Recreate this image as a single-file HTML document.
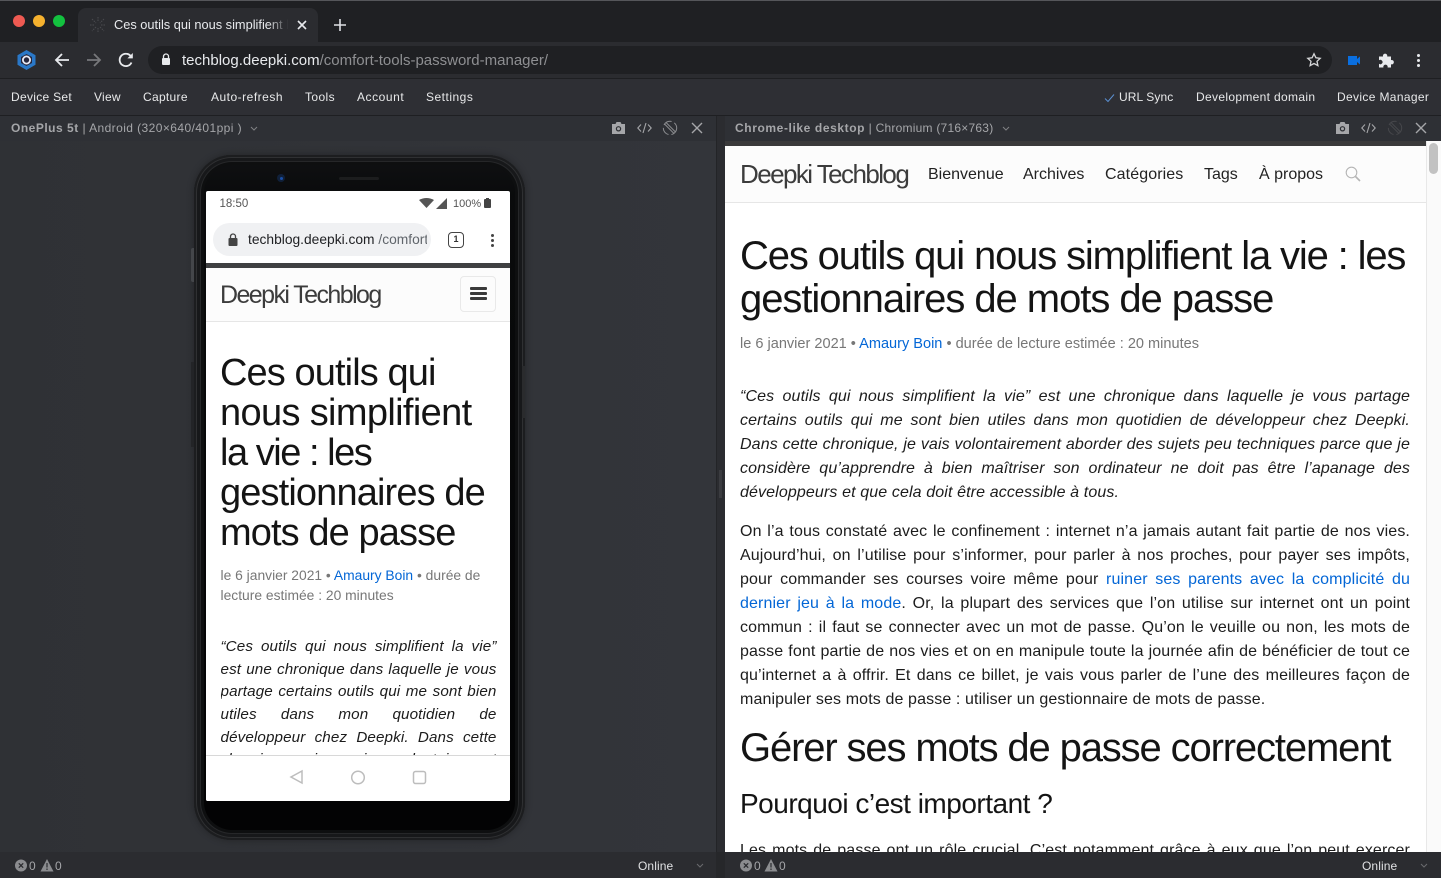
<!DOCTYPE html>
<html><head><meta charset="utf-8"><title>Ces outils qui nous simplifient la vie</title>
<style>
html,body{margin:0;padding:0;width:1441px;height:878px;overflow:hidden;background:#303236;font-family:"Liberation Sans",sans-serif;}
.a{position:absolute;}
.t{position:absolute;white-space:nowrap;}
.m{position:absolute;white-space:nowrap;top:89px;font-size:12px;line-height:16px;color:#e8e9ea;}
.b{position:absolute;left:740px;width:670px;font-size:16px;line-height:24px;height:24px;color:#1c1c1c;white-space:normal;text-align:justify;text-align-last:justify;overflow:hidden;letter-spacing:.12px;}
.e{text-align-last:left;}
.i{font-style:italic;}
.p{position:absolute;left:220.5px;width:276px;font-size:15.2px;line-height:22px;height:22px;color:#1c1c1c;font-style:italic;text-align:justify;text-align-last:justify;overflow:hidden;letter-spacing:.12px;}
.h1{position:absolute;left:740px;font-size:40px;line-height:42px;letter-spacing:-1.25px;color:#141414;white-space:nowrap;}
.h2{position:absolute;left:220px;font-size:38px;line-height:40px;letter-spacing:-1.2px;color:#141414;white-space:nowrap;}
.n{position:absolute;top:165px;font-size:16px;line-height:20px;color:#222;white-space:nowrap;}
a{color:#0366d6;text-decoration:none;}
.meta{color:#777;position:absolute;white-space:nowrap;}
</style></head><body>
<!-- window chrome -->
<div class="a" style="left:0;top:0;width:1441px;height:42px;background:#1f2023;"></div>
<div class="a" style="left:0;top:42px;width:1441px;height:36px;background:#2b2c30;"></div>
<div class="a" style="left:0;top:78px;width:1441px;height:38px;background:#2e2f34;border-top:1px solid #1e1f22;border-bottom:1px solid #1e1f22;box-sizing:border-box;"></div>
<div class="a" style="left:0;top:116px;width:1441px;height:25px;background:#2e3035;"></div>
<div class="a" style="left:0;top:0;width:1441px;height:1px;background:#55565a;"></div>
<div class="a" style="left:13px;top:15px;width:12px;height:12px;border-radius:50%;background:#ee5a52;"></div>
<div class="a" style="left:33px;top:15px;width:12px;height:12px;border-radius:50%;background:#f5b12e;"></div>
<div class="a" style="left:53px;top:15px;width:12px;height:12px;border-radius:50%;background:#13c13f;"></div>
<!-- tab -->
<div class="a" style="left:78px;top:8px;width:240px;height:34px;background:#2b2c30;border-radius:8px 8px 0 0;"></div>
<svg class="a" style="left:89px;top:16px" width="18" height="18" viewBox="0 0 18 18" stroke="#4b4c50" stroke-width="1" fill="none" stroke-dasharray="1.500 1"><path d="M9 1v5M9 12v5M1 9h5M12 9h5M3 3l4 4M11 11l4 4M15 3l-4 4M7 11l-4 4"/></svg>
<div class="t" style="left:114px;top:17px;font-size:12.8px;line-height:16px;color:#e8eaed;width:176px;overflow:hidden;">Ces outils qui nous simplifient la vie</div>
<div class="a" style="left:268px;top:14px;width:24px;height:22px;background:linear-gradient(90deg,rgba(43,44,48,0),#2b2c30 85%);"></div>
<svg class="a" style="left:296px;top:19px" width="12" height="12" viewBox="0 0 12 12" stroke="#e8eaed" stroke-width="1.6"><path d="M2 2l8 8M10 2l-8 8"/></svg>
<svg class="a" style="left:333px;top:18px" width="14" height="14" viewBox="0 0 14 14" stroke="#dfe1e5" stroke-width="1.6"><path d="M7 1v12M1 7h12"/></svg>
<!-- toolbar -->
<svg class="a" style="left:16px;top:49px" width="21" height="22" viewBox="0 0 21 22"><path d="M10.5 1l9 5.2v9.6l-9 5.2-9-5.2V6.200z" fill="#2a78c8"/><path d="M10.500 5l5.500 3v6l-5.500 3-5.500-3V8z" fill="#26273d"/><circle cx="10.500" cy="11" r="3.600" fill="none" stroke="#e8eaf5" stroke-width="1.800"/></svg>
<svg class="a" style="left:53px;top:51px" width="18" height="18" viewBox="0 0 18 18" stroke="#e8eaed" stroke-width="1.800" fill="none"><path d="M16 9H3M9 3L3 9l6 6"/></svg>
<svg class="a" style="left:85px;top:51px" width="18" height="18" viewBox="0 0 18 18" stroke="#77787b" stroke-width="1.800" fill="none"><path d="M2 9h13M9 3l6 6-6 6"/></svg>
<svg class="a" style="left:117px;top:51px" width="18" height="18" viewBox="0 0 18 18" stroke="#e8eaed" stroke-width="1.800" fill="none"><path d="M14.500 11.500A6.200 6.200 0 1 1 13.500 4.800L15 6.500"/><path d="M15.800 2v5.400h-5.400z" fill="#e8eaed" stroke="none"/></svg>
<div class="a" style="left:148px;top:46px;width:1184px;height:28px;border-radius:14px;background:#1f2023;"></div>
<svg class="a" style="left:161px;top:53px" width="10" height="13" viewBox="0 0 10 13"><path d="M2.500 5.500V3.500a2.500 2.500 0 0 1 5 0v2" fill="none" stroke="#e8eaed" stroke-width="1.300"/><rect x="1" y="5" width="8" height="7" rx="1" fill="#e8eaed"/></svg>
<div class="t" style="left:182px;top:52px;font-size:15px;line-height:18px;color:#e8eaed;">techblog.deepki.com<span style="color:#8e8f92">/comfort-tools-password-manager/</span></div>
<svg class="a" style="left:1306px;top:52px" width="16" height="16" viewBox="0 0 16 16" fill="none" stroke="#d5d6d8" stroke-width="1.300"><path d="M8 1.800l1.900 4 4.300.500-3.200 3 .9 4.300L8 11.500l-3.900 2.100.9-4.300-3.200-3 4.300-.500z"/></svg>
<svg class="a" style="left:1348px;top:56px" width="12" height="9" viewBox="0 0 12 9" fill="#0a6fe0"><rect x="0" y="0" width="9" height="9"/><path d="M9 3L12 .500v8L9 6z"/></svg>
<svg class="a" style="left:1378px;top:52px" width="16" height="16" viewBox="0 0 16 16" fill="#e8eaed"><path d="M1 4.500h4a2.200 2.200 0 1 1 4.200 0h3.800v3.600a2.200 2.200 0 1 1 0 4.200V15.500H9.600a2.200 2.200 0 1 0-4.200 0H1v-3.700a2.200 2.200 0 1 0 0-3.500z"/></svg>
<div class="a" style="left:1417px;top:54px;width:3px;height:3px;border-radius:50%;background:#e8eaed;box-shadow:0 5px 0 #e8eaed,0 10px 0 #e8eaed;"></div>
<!-- menu -->
<div class="m" style="left:11px;letter-spacing:.3px;">Device Set</div>
<div class="m" style="left:94px;letter-spacing:.25px;">View</div>
<div class="m" style="left:143px;letter-spacing:.3px;">Capture</div>
<div class="m" style="left:211px;letter-spacing:.5px;">Auto-refresh</div>
<div class="m" style="left:305px;letter-spacing:.4px;">Tools</div>
<div class="m" style="left:357px;letter-spacing:.55px;">Account</div>
<div class="m" style="left:426px;letter-spacing:.5px;">Settings</div>
<svg class="a" style="left:1104px;top:93px" width="11" height="10" viewBox="0 0 11 10" fill="none" stroke="#5b8fd0" stroke-width="1"><path d="M1 5.500l3 3L10 1.500"/></svg>
<div class="m" style="left:1119px;letter-spacing:.1px;">URL Sync</div>
<div class="m" style="left:1196px;letter-spacing:.33px;">Development domain</div>
<div class="m" style="left:1337px;letter-spacing:.35px;">Device Manager</div>
<!-- device headers -->
<div class="t" style="left:11px;top:120px;font-size:12px;line-height:16px;color:#a5a6a9;letter-spacing:.42px;"><b style="letter-spacing:.5px">OnePlus 5t</b> | Android (320×640/401ppi )</div>
<svg class="a" style="left:250px;top:126px" width="8" height="5" viewBox="0 0 8 5" fill="none" stroke="#808184"><path d="M1 1l3 3 3-3"/></svg>
<div class="t" style="left:735px;top:120px;font-size:12px;line-height:16px;color:#a5a6a9;letter-spacing:.23px;"><b style="letter-spacing:.6px">Chrome-like desktop</b> | Chromium (716×763)</div>
<svg class="a" style="left:1002px;top:126px" width="8" height="5" viewBox="0 0 8 5" fill="none" stroke="#808184"><path d="M1 1l3 3 3-3"/></svg>
<!-- header icons left -->
<svg class="a" style="left:611px;top:121px" width="15" height="14" viewBox="0 0 15 14"><path d="M1 3h3.500l1-2h4l1 2H14v10H1z" fill="#a5a6a9"/><circle cx="7.500" cy="7.800" r="2.700" fill="#2e3035"/><circle cx="7.500" cy="7.800" r="1.500" fill="#a5a6a9"/></svg>
<svg class="a" style="left:637px;top:122px" width="15" height="12" viewBox="0 0 15 12" fill="none" stroke="#a5a6a9" stroke-width="1.100"><path d="M4 2.500L.800 6 4 9.500M11 2.500L14.200 6 11 9.500M9 1L6 11"/></svg>
<svg class="a" style="left:662px;top:120px" width="16" height="16" viewBox="0 0 16 16" fill="none" stroke="#8b8c8f" stroke-width="1"><circle cx="8" cy="8" r="6.700" stroke-dasharray="9 3"/><path d="M4 2.500l9.500 9.500M2.500 4L12 13.500"/></svg>
<svg class="a" style="left:691px;top:122px" width="12" height="12" viewBox="0 0 12 12" stroke="#a5a6a9" stroke-width="1.400"><path d="M1 1l10 10M11 1L1 11"/></svg>
<svg class="a" style="left:1335px;top:121px" width="15" height="14" viewBox="0 0 15 14"><path d="M1 3h3.500l1-2h4l1 2H14v10H1z" fill="#a5a6a9"/><circle cx="7.500" cy="7.800" r="2.700" fill="#2e3035"/><circle cx="7.500" cy="7.800" r="1.500" fill="#a5a6a9"/></svg>
<svg class="a" style="left:1361px;top:122px" width="15" height="12" viewBox="0 0 15 12" fill="none" stroke="#a5a6a9" stroke-width="1.100"><path d="M4 2.500L.800 6 4 9.500M11 2.500L14.200 6 11 9.500M9 1L6 11"/></svg>
<svg class="a" style="left:1387px;top:120px" width="16" height="16" viewBox="0 0 16 16" fill="none" stroke="#46474b" stroke-width="1"><circle cx="8" cy="8" r="6.700" stroke-dasharray="9 3"/><path d="M4 2.500l9.500 9.500M2.500 4L12 13.500"/></svg>
<svg class="a" style="left:1415px;top:122px" width="12" height="12" viewBox="0 0 12 12" stroke="#a5a6a9" stroke-width="1.400"><path d="M1 1l10 10M11 1L1 11"/></svg>
<!-- left pane -->
<div class="a" style="left:0;top:141px;width:716px;height:711px;background:linear-gradient(90deg,#2f3135,#33353a);"></div>
<div class="a" style="left:716px;top:116px;width:9px;height:736px;background:#2b2c30;border-left:1px solid #232427;box-sizing:border-box;"></div>
<div class="a" style="left:719px;top:470px;width:3px;height:28px;background:#3b3c40;"></div>
<!-- phone -->
<div class="a" style="left:194px;top:155px;width:331px;height:685px;box-sizing:border-box;border-radius:38px;background:linear-gradient(180deg,#101113 0,#0a0b0c 6%,#030304 95%);box-shadow:inset 0 0 0 2px #1c1d1f,inset 0 0 0 3px #2f3032,inset 0 0 0 6px #17181a,inset 0 0 0 7px #262729,inset 0 0 0 10px #0e0f10,0 0 8px rgba(0,0,0,.3);"></div>
<div class="a" style="left:191px;top:248px;width:3px;height:34px;background:#44464a;border-radius:2px 0 0 2px;"></div>
<div class="a" style="left:191px;top:362px;width:3px;height:85px;background:#232427;"></div>
<div class="a" style="left:522px;top:366px;width:3px;height:52px;background:#2a2b2d;"></div>
<div class="a" style="left:277px;top:174px;width:8px;height:8px;border-radius:50%;background:#10203a;"></div>
<div class="a" style="left:279.500px;top:176.500px;width:3px;height:3px;border-radius:50%;background:#1a4fa8;"></div>
<div class="a" style="left:339px;top:177px;width:40px;height:3px;background:#1c1d1e;border-radius:2px;"></div>
<!-- phone screen -->
<div class="a" style="left:206px;top:191px;width:304px;height:610px;background:#fff;border-radius:2px;overflow:hidden;"></div>
<div class="t" style="left:219.500px;top:197px;font-size:11.500px;line-height:14px;color:#555;">18:50</div>
<svg class="a" style="left:419px;top:197px" width="30" height="12" viewBox="0 0 30 12"><path d="M0 3Q7.500-1 15 3L7.500 11z" fill="#555"/><path d="M28 1v11H17z" fill="#555"/></svg>
<div class="t" style="left:453px;top:197px;font-size:11px;line-height:14px;color:#555;">100%</div>
<div class="a" style="left:484px;top:199px;width:7px;height:9px;background:#444;border-radius:1px;"></div>
<div class="a" style="left:486px;top:198px;width:3px;height:1px;background:#444;"></div>
<div class="a" style="left:213px;top:223px;width:218px;height:33px;background:#f0f1f3;border-radius:17px;"></div>
<svg class="a" style="left:228px;top:233px" width="10" height="13" viewBox="0 0 10 13"><path d="M2.500 5.500V3.500a2.500 2.500 0 0 1 5 0v2" fill="none" stroke="#444" stroke-width="1.300"/><rect x="0.500" y="5" width="9" height="8" rx="1" fill="#444"/></svg>
<div class="t" style="left:248px;top:232px;font-size:13.800px;line-height:16px;color:#202124;width:179px;overflow:hidden;">techblog.deepki.com <span style="color:#60656b">/comfort-tools-password</span></div>
<div class="a" style="left:448px;top:232px;width:16px;height:16px;box-sizing:border-box;border:1.500px solid #444;border-radius:4px;font-size:9px;line-height:13px;text-align:center;color:#333;font-weight:bold;">1</div>
<div class="a" style="left:491px;top:234px;width:3px;height:3px;border-radius:50%;background:#444;box-shadow:0 5px 0 #444,0 10px 0 #444;"></div>
<div class="a" style="left:206px;top:263px;width:304px;height:5px;background:#3f4042;"></div>
<div class="a" style="left:206px;top:268px;width:304px;height:53px;background:#fcfcfc;border-bottom:1px solid #e6e6e6;"></div>
<div class="t" style="left:220px;top:280px;font-size:25px;line-height:30px;letter-spacing:-1.580px;color:#3c3c3c;">Deepki Techblog</div>
<div class="a" style="left:460px;top:276px;width:36px;height:36px;box-sizing:border-box;border:1px solid #e9e9e9;border-radius:4px;"></div>
<div class="a" style="left:470px;top:287px;width:17px;height:3px;background:#3a3a3a;border-radius:1px;box-shadow:0 5px 0 #3a3a3a,0 10px 0 #3a3a3a;"></div>
<div class="h2" style="top:353px;letter-spacing:-.9px;">Ces outils qui</div>
<div class="h2" style="top:393px;letter-spacing:-.65px;">nous simplifient</div>
<div class="h2" style="top:433px;letter-spacing:-1.47px;">la vie : les</div>
<div class="h2" style="top:473px;letter-spacing:-.87px;">gestionnaires de</div>
<div class="h2" style="top:513px;letter-spacing:-.9px;">mots de passe</div>
<div class="meta" style="left:220.500px;top:565px;font-size:13.850px;line-height:20px;">le 6 janvier 2021 • <a>Amaury Boin</a> • durée de</div>
<div class="meta" style="left:220.500px;top:585px;font-size:13.850px;line-height:20px;">lecture estimée : 20 minutes</div>
<div class="p" style="top:636px;">“Ces outils qui nous simplifient la vie”</div>
<div class="p" style="top:659px;">est une chronique dans laquelle je vous</div>
<div class="p" style="top:681px;">partage certains outils qui me sont bien</div>
<div class="p" style="top:704px;">utiles dans mon quotidien de</div>
<div class="p" style="top:727px;">développeur chez Deepki. Dans cette</div>
<div class="p" style="top:749px;height:6px;">chronique, je vais volontairement aborder</div>
<div class="a" style="left:206px;top:755px;width:304px;height:46px;background:#fff;border-top:1px solid #d8d8d8;box-sizing:border-box;border-radius:0 0 2px 2px;"></div>
<svg class="a" style="left:289px;top:769px" width="140" height="17" viewBox="0 0 140 17" fill="none" stroke="#bdbdbd" stroke-width="1.500"><path d="M13 2v12L2 8z"/><circle cx="69" cy="8.500" r="6.300"/><rect x="124.500" y="2.500" width="12" height="12" rx="2"/></svg>
<!-- right pane -->
<div class="a" style="left:725px;top:141px;width:701px;height:5px;background:#3a3a3b;"></div>
<div class="a" style="left:725px;top:146px;width:716px;height:706px;background:#fff;overflow:hidden;"></div>
<div class="a" style="left:725px;top:146px;width:701px;height:56px;background:#fcfcfc;border-bottom:1px solid #e6e6e6;"></div>
<div class="t" style="left:740px;top:158px;font-size:26px;line-height:32px;letter-spacing:-1.570px;color:#3c3c3c;">Deepki Techblog</div>
<div class="n" style="left:928px;">Bienvenue</div>
<div class="n" style="left:1023px;">Archives</div>
<div class="n" style="left:1105px;letter-spacing:.1px;">Catégories</div>
<div class="n" style="left:1204px;">Tags</div>
<div class="n" style="left:1259px;">À propos</div>
<svg class="a" style="left:1345px;top:166px" width="16" height="16" viewBox="0 0 16 16" fill="none" stroke="#b5b5b5" stroke-width="1.100"><circle cx="6.500" cy="6.500" r="5.300"/><path d="M10.500 10.500l4.500 4.500" stroke-width="1.600"/></svg>
<div class="a" style="left:1426px;top:141px;width:15px;height:711px;background:#fafafa;border-left:1px solid #e8e8e8;box-sizing:border-box;"></div>
<div class="a" style="left:1429px;top:143px;width:9px;height:31px;background:#c2c2c2;border-radius:5px;"></div>
<div class="h1" style="top:235px;letter-spacing:-1.150px;">Ces outils qui nous simplifient la vie : les</div>
<div class="h1" style="top:278px;letter-spacing:-1.050px;">gestionnaires de mots de passe</div>
<div class="meta" style="left:740px;top:334px;font-size:14.550px;line-height:20px;">le 6 janvier 2021 • <a>Amaury Boin</a> • durée de lecture estimée : 20 minutes</div>
<div class="b i" style="top:385px;">“Ces outils qui nous simplifient la vie” est une chronique dans laquelle je vous partage</div>
<div class="b i" style="top:409px;">certains outils qui me sont bien utiles dans mon quotidien de développeur chez Deepki.</div>
<div class="b i" style="top:433px;">Dans cette chronique, je vais volontairement aborder des sujets peu techniques parce que je</div>
<div class="b i" style="top:457px;">considère qu’apprendre à bien maîtriser son ordinateur ne doit pas être l’apanage des</div>
<div class="b i e" style="top:481px;">développeurs et que cela doit être accessible à tous.</div>
<div class="b" style="top:520px;">On l’a tous constaté avec le confinement : internet n’a jamais autant fait partie de nos vies.</div>
<div class="b" style="top:544px;">Aujourd’hui, on l’utilise pour s’informer, pour parler à nos proches, pour payer ses impôts,</div>
<div class="b" style="top:568px;">pour commander ses courses voire même pour <a>ruiner ses parents avec la complicité du</a></div>
<div class="b" style="top:592px;"><a>dernier jeu à la mode</a>. Or, la plupart des services que l’on utilise sur internet ont un point</div>
<div class="b" style="top:616px;">commun : il faut se connecter avec un mot de passe. Qu’on le veuille ou non, les mots de</div>
<div class="b" style="top:640px;">passe font partie de nos vies et on en manipule toute la journée afin de bénéficier de tout ce</div>
<div class="b" style="top:664px;">qu’internet a à offrir. Et dans ce billet, je vais vous parler de l’une des meilleures façon de</div>
<div class="b e" style="top:688px;">manipuler ses mots de passe : utiliser un gestionnaire de mots de passe.</div>
<div class="h1" style="top:727px;letter-spacing:-1.140px;">Gérer ses mots de passe correctement</div>
<div class="t" style="left:740px;top:787px;font-size:28px;line-height:34px;letter-spacing:-.5px;color:#141414;">Pourquoi c’est important ?</div>
<div class="b" style="top:839px;height:13px;">Les mots de passe ont un rôle crucial. C’est notamment grâce à eux que l’on peut exercer</div>
<!-- status bars -->
<div class="a" style="left:0;top:852px;width:1441px;height:26px;background:#2b2c30;"></div>
<div class="a" style="left:716px;top:852px;width:9px;height:26px;background:#26272a;"></div>
<svg class="a" style="left:15px;top:859px" width="50" height="13" viewBox="0 0 50 13"><circle cx="6" cy="6.500" r="6" fill="#8b8c8f"/><path d="M3.800 4.300l4.400 4.400M8.200 4.300L3.800 8.700" stroke="#2b2c30" stroke-width="1.300"/><path d="M32 0l6.500 12.500h-13z" fill="#8b8c8f"/><path d="M32 4v4.500M32 9.500v1.500" stroke="#2b2c30" stroke-width="1.200"/></svg>
<div class="t" style="left:29px;top:859px;font-size:12px;line-height:15px;color:#a5a6a9;">0</div>
<div class="t" style="left:55px;top:859px;font-size:12px;line-height:15px;color:#a5a6a9;">0</div>
<div class="t" style="left:638px;top:859px;font-size:12px;line-height:15px;color:#e0e1e3;letter-spacing:.1px;">Online</div>
<svg class="a" style="left:696px;top:863px" width="8" height="5" viewBox="0 0 8 5" fill="none" stroke="#6a6b6e"><path d="M1 1l3 3 3-3"/></svg>
<svg class="a" style="left:740px;top:859px" width="50" height="13" viewBox="0 0 50 13"><circle cx="6" cy="6.500" r="6" fill="#8b8c8f"/><path d="M3.800 4.300l4.400 4.400M8.200 4.300L3.800 8.700" stroke="#2b2c30" stroke-width="1.300"/><path d="M31 0l6.500 12.500h-13z" fill="#8b8c8f"/><path d="M31 4v4.500M31 9.500v1.500" stroke="#2b2c30" stroke-width="1.200"/></svg>
<div class="t" style="left:754px;top:859px;font-size:12px;line-height:15px;color:#a5a6a9;">0</div>
<div class="t" style="left:779px;top:859px;font-size:12px;line-height:15px;color:#a5a6a9;">0</div>
<div class="t" style="left:1362px;top:859px;font-size:12px;line-height:15px;color:#e0e1e3;letter-spacing:.1px;">Online</div>
<svg class="a" style="left:1420px;top:863px" width="8" height="5" viewBox="0 0 8 5" fill="none" stroke="#6a6b6e"><path d="M1 1l3 3 3-3"/></svg>
</body></html>
